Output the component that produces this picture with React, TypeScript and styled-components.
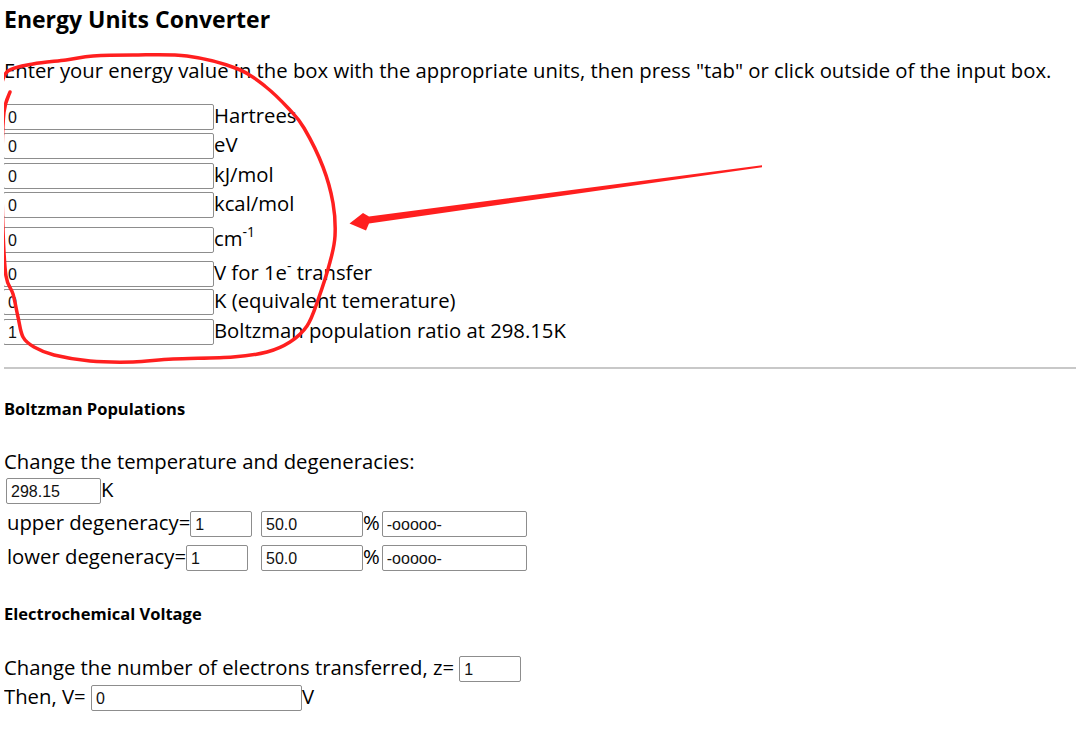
import React from "react";
import styled, { createGlobalStyle } from "styled-components";

const GlobalStyle = createGlobalStyle`
  body {
    margin: 0;
    padding: 0 4px;
    background: #fff;
    color: #000;
    font-family: "Open Sans", "Noto Sans", sans-serif;
  }
`;

const Page = styled.div`
  position: relative;
  width: 1072px;
  height: 736px;
  overflow: hidden;
`;

const Title = styled.h1`
  margin: 0;
  padding-top: 6px;
  font-size: 23px;
  line-height: 26px;
  font-weight: 700;
`;

const Para = styled.p<{ $top: number }>`
  margin: ${({ $top }) => $top}px 0 0;
  font-size: 20.3px;
  line-height: 26px;
`;

const SubHead = styled.h4<{ $top: number }>`
  margin: ${({ $top }) => $top}px 0 0;
  font-size: 16.5px;
  line-height: 20px;
  font-weight: 700;
`;

const UnitRow = styled.div<{ $space: number }>`
  display: flex;
  align-items: center;
  margin-top: ${({ $space }) => $space}px;
  height: 26px;
`;

const Line = styled.div<{ $top: number; $indent?: number }>`
  display: flex;
  align-items: center;
  margin-top: ${({ $top }) => $top}px;
  padding-left: ${({ $indent }) => $indent ?? 0}px;
  height: 26px;
`;

const Label = styled.span`
  font-size: 20.3px;
  line-height: 26px;
  padding-bottom: 4px;
  white-space: nowrap;
`;

const Cell = styled.div<{ $w: number }>`
  display: flex;
  align-items: center;
  width: ${({ $w }) => $w}px;
`;

const Box = styled.input<{ $w: number; $ml?: number }>`
  box-sizing: border-box;
  width: ${({ $w }) => $w}px;
  height: 26px;
  margin: 0 0 0 ${({ $ml }) => $ml ?? 0}px;
  padding: 1px 4px 0;
  border: 1px solid #8d8d8d;
  border-radius: 2px;
  font-family: "Liberation Sans", Arial, sans-serif;
  font-size: 16px;
  color: #111;
  background: #fff;
  outline: none;
`;

const Sup = styled.sup`
  font-size: 14px;
  vertical-align: 9px;
  line-height: 0;
`;

const Rule = styled.hr`
  margin: 22px -4px 0;
  border: 0;
  height: 2px;
  background: #c8c8c8;
`;

const Overlay = styled.svg`
  position: absolute;
  left: -4px;
  top: 0;
  pointer-events: none;
`;

const units: { value: string; space: number; label: React.ReactNode }[] = [
  { value: "0", space: 0, label: "Hartrees" },
  { value: "0", space: 3, label: "eV" },
  { value: "0", space: 4, label: "kJ/mol" },
  { value: "0", space: 3, label: "kcal/mol" },
  { value: "0", space: 9, label: <>cm<Sup>-1</Sup></> },
  { value: "0", space: 8, label: <>V for 1e<Sup>-</Sup> transfer</> },
  { value: "0", space: 2, label: "K (equivalent temerature)" },
  { value: "1", space: 4, label: "Boltzman population ratio at 298.15K" },
];

const loop: [number, number][] = [
  [10, 92], [4, 112], [2, 160], [3, 230], [6, 276], [13, 294], [18, 317], [23, 337],
  [34, 347], [54, 355], [90, 361], [133, 362], [173, 359], [233, 357], [267, 352],
  [290, 342], [307, 326], [318, 300], [330, 262], [335, 236], [333, 203], [323, 167],
  [304, 128], [289, 109], [266, 87], [238, 69], [187, 56], [133, 55], [93, 56],
  [66, 60], [33, 64], [8, 71], [1, 86],
];

// catmull-rom -> cubic bezier so the hand-drawn ring looks smooth
const smooth = (pts: [number, number][]) => {
  let d = `M${pts[0][0]} ${pts[0][1]}`;
  for (let i = 0; i < pts.length - 1; i++) {
    const p0 = pts[i - 1] || pts[i];
    const p1 = pts[i];
    const p2 = pts[i + 1];
    const p3 = pts[i + 2] || p2;
    const c1x = p1[0] + (p2[0] - p0[0]) / 6;
    const c1y = p1[1] + (p2[1] - p0[1]) / 6;
    const c2x = p2[0] - (p3[0] - p1[0]) / 6;
    const c2y = p2[1] - (p3[1] - p1[1]) / 6;
    d += ` C${c1x.toFixed(1)} ${c1y.toFixed(1)} ${c2x.toFixed(1)} ${c2y.toFixed(1)} ${p2[0]} ${p2[1]}`;
  }
  return d;
};

const Annotation = () => (
  <Overlay width={1080} height={736} viewBox="0 0 1080 736">
    <path d={smooth(loop)} fill="none" stroke="#ff1f1f" strokeWidth={3.5} strokeLinecap="round" strokeLinejoin="round" />
    <polygon
      points="762,165.2 762,167.2 369,223.5 366,230.5 349.5,223.5 363,213 369,216.5"
      fill="#ff1f1f"
    />
  </Overlay>
);

export default function App() {
  return (
    <>
      <GlobalStyle />
      <Page>
        <Title>Energy Units Converter</Title>
        <Para $top={25}>
          Enter your energy value in the box with the appropriate units, then press "tab" or click outside of the input box.
        </Para>
        <div style={{ marginTop: 21 }}>
          {units.map((u, i) => (
            <UnitRow key={i} $space={u.space}>
              <Box $w={211} $ml={-1} defaultValue={u.value} />
              <Label>{u.label}</Label>
            </UnitRow>
          ))}
        </div>
        <Rule />
        <SubHead $top={30}>Boltzman Populations</SubHead>
        <Para $top={29}>Change the temperature and degeneracies:</Para>
        <Line $top={4} $indent={2}>
          <Box $w={95} defaultValue="298.15" />
          <Label>K</Label>
        </Line>
        <Line $top={7} $indent={3}>
          <Cell $w={254}>
            <Label>upper degeneracy=</Label>
            <Box $w={62} defaultValue="1" />
          </Cell>
          <Box $w={102} defaultValue="50.0" />
          <Label>%</Label>
          <Box $w={145} $ml={2} defaultValue="-ooooo-" />
        </Line>
        <Line $top={8} $indent={3}>
          <Cell $w={254}>
            <Label>lower degeneracy=</Label>
            <Box $w={62} defaultValue="1" />
          </Cell>
          <Box $w={102} defaultValue="50.0" />
          <Label>%</Label>
          <Box $w={145} $ml={2} defaultValue="-ooooo-" />
        </Line>
        <SubHead $top={33}>Electrochemical Voltage</SubHead>
        <Line $top={32}>
          <Label>Change the number of electrons transferred, z=&nbsp;</Label>
          <Box $w={62} defaultValue="1" />
        </Line>
        <Line $top={3}>
          <Label>Then, V=&nbsp;</Label>
          <Box $w={211} defaultValue="0" />
          <Label>V</Label>
        </Line>
        <Annotation />
      </Page>
    </>
  );
}
